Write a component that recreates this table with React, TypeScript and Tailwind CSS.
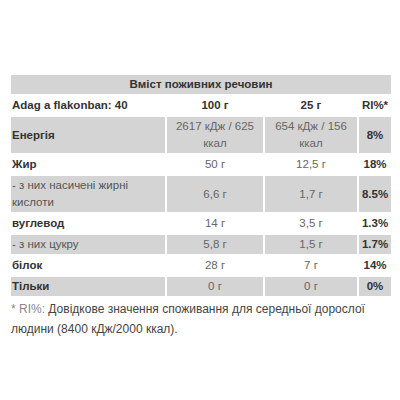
const rows = [
  { label: 'Енергія', bold: true, a: '2617 кДж / 625 ккал', b: '654 кДж / 156 ккал', ri: '8%', gray: true },
  { label: 'Жир', bold: true, a: '50 г', b: '12,5 г', ri: '18%', gray: false },
  { label: '- з них насичені жирні кислоти', bold: false, a: '6,6 г', b: '1,7 г', ri: '8.5%', gray: true },
  { label: 'вуглевод', bold: true, a: '14 г', b: '3,5 г', ri: '1.3%', gray: false },
  { label: '- з них цукру', bold: false, a: '5,8 г', b: '1,5 г', ri: '1.7%', gray: true },
  { label: 'білок', bold: true, a: '28 г', b: '7 г', ri: '14%', gray: false },
  { label: 'Тільки', bold: true, a: '0 г', b: '0 г', ri: '0%', gray: true },
]

export default function App() {
  return (
    <div className="w-[400px] h-[400px] bg-white font-['Liberation_Sans',Arial,sans-serif] text-[11.5px] leading-[17px] text-[#333]">
      <div className="pt-[73px] pl-[9px]">
        <table className="table-fixed w-[384px] border-separate border-spacing-[2px]">
          <colgroup>
            <col className="w-[154px]" />
            <col className="w-[96px]" />
            <col className="w-[92px]" />
            <col className="w-[32px]" />
          </colgroup>
          <tbody>
            <tr>
              <td colSpan={4} className="bg-[#d4d4d4] text-center font-bold py-[1px] text-[#333]">
                Вміст поживних речовин
              </td>
            </tr>
            <tr className="font-bold">
              <td className="px-[1px] py-[1px]">Adag a flakonban: 40</td>
              <td className="text-center py-[1px]">100 г</td>
              <td className="text-center py-[1px]">25 г</td>
              <td className="text-center py-[1px] whitespace-nowrap">RI%*</td>
            </tr>
            {rows.map((r) => (
              <tr key={r.label}>
                <td className={`px-[1px] py-[1px] ${r.bold ? 'font-bold text-[#333]' : 'text-[#555]'} ${r.gray ? 'bg-[#d4d4d4]' : ''}`}>
                  {r.label}
                </td>
                <td className={`text-center py-[1px] px-[2px] text-[#666] ${r.gray ? 'bg-[#d4d4d4]' : ''}`}>{r.a}</td>
                <td className={`text-center py-[1px] px-[2px] text-[#666] ${r.gray ? 'bg-[#d4d4d4]' : ''}`}>{r.b}</td>
                <td className={`text-center py-[1px] font-bold text-[#333] ${r.gray ? 'bg-[#d4d4d4]' : ''}`}>{r.ri}</td>
              </tr>
            ))}
          </tbody>
        </table>
        <p className="pl-[2px] pr-[10px] mt-[1px] text-[12px] leading-[20px] text-[#444]">
          <span className="text-[#888]">* RI%:</span> Довідкове значення споживання для середньої дорослої людини (8400 кДж/2000 ккал).
        </p>
      </div>
    </div>
  )
}
